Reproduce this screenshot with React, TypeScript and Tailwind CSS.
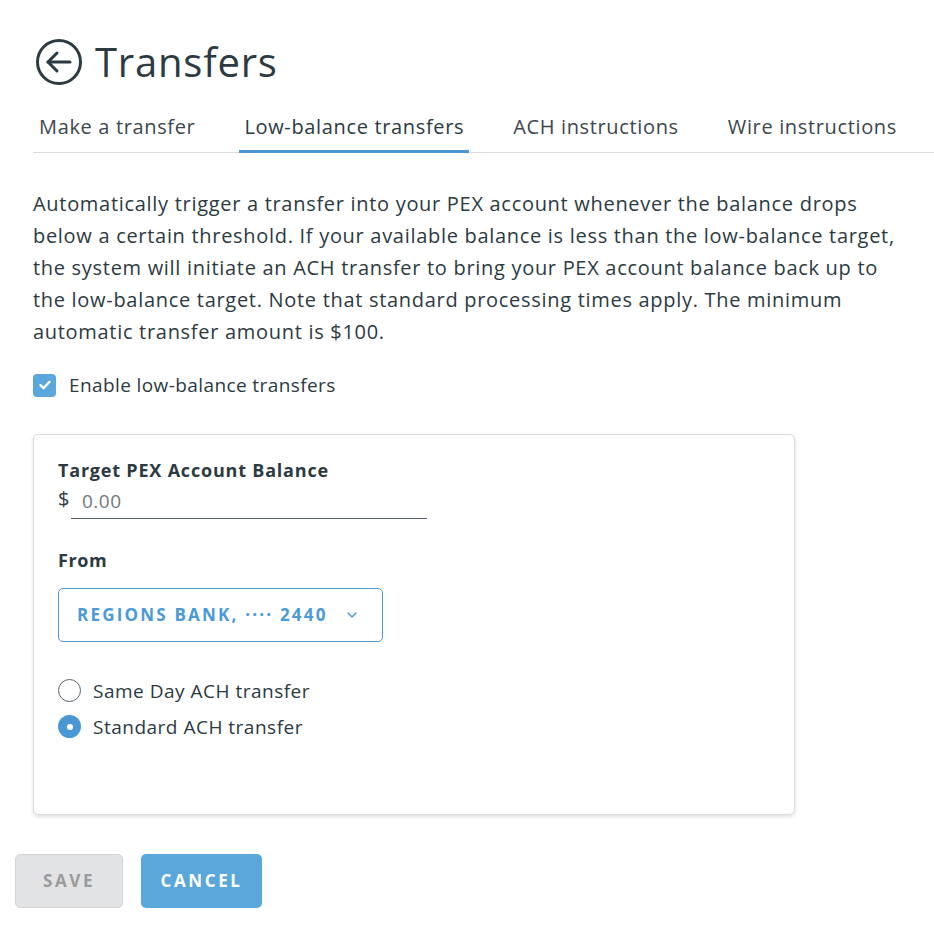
import { useState } from 'react';

const tabs = ['Make a transfer', 'Low-balance transfers', 'ACH instructions', 'Wire instructions'];

function BackIcon() {
  return (
    <svg width="48" height="48" viewBox="0 0 48 48" fill="none" stroke="#2c3a42" strokeWidth="3" strokeLinecap="round" strokeLinejoin="round">
      <circle cx="24" cy="24" r="21.5" />
      <path d="M35 24H13" />
      <path d="M22 15l-9 9 9 9" />
    </svg>
  );
}

export default function App() {
  const [enabled, setEnabled] = useState(true);
  const [speed, setSpeed] = useState('standard');

  return (
    <div className="min-h-[936px] bg-white text-[#2c3a42] font-['Open_Sans','Noto_Sans',sans-serif]">
      <div className="pl-[33px]">
        {/* header */}
        <div className="flex items-center gap-[12px] pt-[37px] pl-[2px]">
          <BackIcon />
          <h1 className="text-[40px] leading-[50px] tracking-[0.8px]">Transfers</h1>
        </div>

        {/* tabs */}
        <div className="mt-[23px] flex gap-[39px] border-b border-[#dcdcdc] pl-[1px]">
          {tabs.map((t, i) => (
            <div
              key={t}
              className={
                'px-[5px] pb-[9px] pt-[3px] text-[20px] leading-[28px] tracking-[0.65px] border-b-[3px] -mb-px ' +
                (i === 1 ? 'border-[#4a97d5] text-[#2c3a42]' : 'border-transparent text-[#3c474e]')
              }
            >
              {t}
            </div>
          ))}
        </div>

        {/* description */}
        <p className="mt-[35px] max-w-[875px] text-[20px] leading-[32px] tracking-[0.7px]">
          Automatically trigger a transfer into your PEX account whenever the balance drops below a certain threshold. If your
          available balance is less than the low-balance target, the system will initiate an ACH transfer to bring your PEX
          account balance back up to the low-balance target. Note that standard processing times apply. The minimum automatic
          transfer amount is $100.
        </p>

        {/* checkbox */}
        <label className="mt-[24px] flex items-center gap-[13px] cursor-pointer">
          <button
            onClick={() => setEnabled(!enabled)}
            className={
              'w-[23px] h-[23px] rounded-[4px] flex items-center justify-center ' +
              (enabled ? 'bg-[#5aa7db]' : 'border border-[#9aa] bg-white')
            }
          >
            {enabled && (
              <svg width="14" height="14" viewBox="0 0 14 14" fill="none" stroke="white" strokeWidth="2.4" strokeLinecap="round" strokeLinejoin="round">
                <path d="M2.5 7.2l3 3 6-6.4" />
              </svg>
            )}
          </button>
          <span className="text-[19px] leading-[26px] tracking-[0.4px]">Enable low-balance transfers</span>
        </label>

        {/* card */}
        <div className="mt-[36px] w-[762px] h-[381px] rounded-[5px] border border-[#d9dbdc] bg-white shadow-[0_2px_4px_rgba(0,0,0,0.12)] pl-[24px] pt-[20px]">
          <div className="text-[18px] leading-[30px] font-bold tracking-[0.8px]">Target PEX Account Balance</div>
          <div className="flex items-end">
            <span className="text-[20px] leading-[28px] w-[13px] pb-[6px]">$</span>
            <div className="w-[356px] border-b border-[#55606a] pb-[4px] pl-[11px] text-[19px] leading-[26px] tracking-[0.5px] text-[#70787e]">
              0.00
            </div>
          </div>

          <div className="mt-[26px] text-[18px] leading-[30px] font-bold tracking-[0.6px]">From</div>
          <button className="mt-[13px] w-[325px] h-[54px] rounded-[5px] border border-[#4a9ad8] flex items-center pl-[18px] gap-[18px] text-[#4a9ad8] text-[17px] font-bold tracking-[2.2px]">
            <span>REGIONS BANK, ···· 2440</span>
            <svg width="12" height="8" viewBox="0 0 12 8" fill="none" stroke="#4a9ad8" strokeWidth="1.5" strokeLinecap="round" strokeLinejoin="round">
              <path d="M2 2l4 4 4-4" />
            </svg>
          </button>

          <div className="mt-[37px] flex flex-col gap-[13px]">
            {[
              ['sameday', 'Same Day ACH transfer'],
              ['standard', 'Standard ACH transfer'],
            ].map(([k, label]) => (
              <label key={k} className="flex items-center gap-[12px] cursor-pointer" onClick={() => setSpeed(k)}>
                <span
                  className={
                    'w-[23px] h-[23px] rounded-full flex items-center justify-center ' +
                    (speed === k ? 'bg-[#4a97d5]' : 'border border-[#5a656c] bg-white')
                  }
                >
                  {speed === k && <span className="w-[6px] h-[6px] rounded-full bg-white" />}
                </span>
                <span className="text-[19px] leading-[22px] tracking-[0.5px]">{label}</span>
              </label>
            ))}
          </div>
        </div>
      </div>

      {/* actions */}
      <div className="mt-[39px] ml-[15px] flex gap-[18px]">
        <button disabled className="w-[108px] h-[54px] rounded-[5px] border border-[#d3d5d6] bg-[#e2e3e4] text-[#9a9c9e] text-[17px] font-bold tracking-[2.6px]">
          SAVE
        </button>
        <button className="w-[121px] h-[54px] rounded-[5px] bg-[#5aa7db] text-white text-[17px] font-bold tracking-[2.6px]">
          CANCEL
        </button>
      </div>
    </div>
  );
}
